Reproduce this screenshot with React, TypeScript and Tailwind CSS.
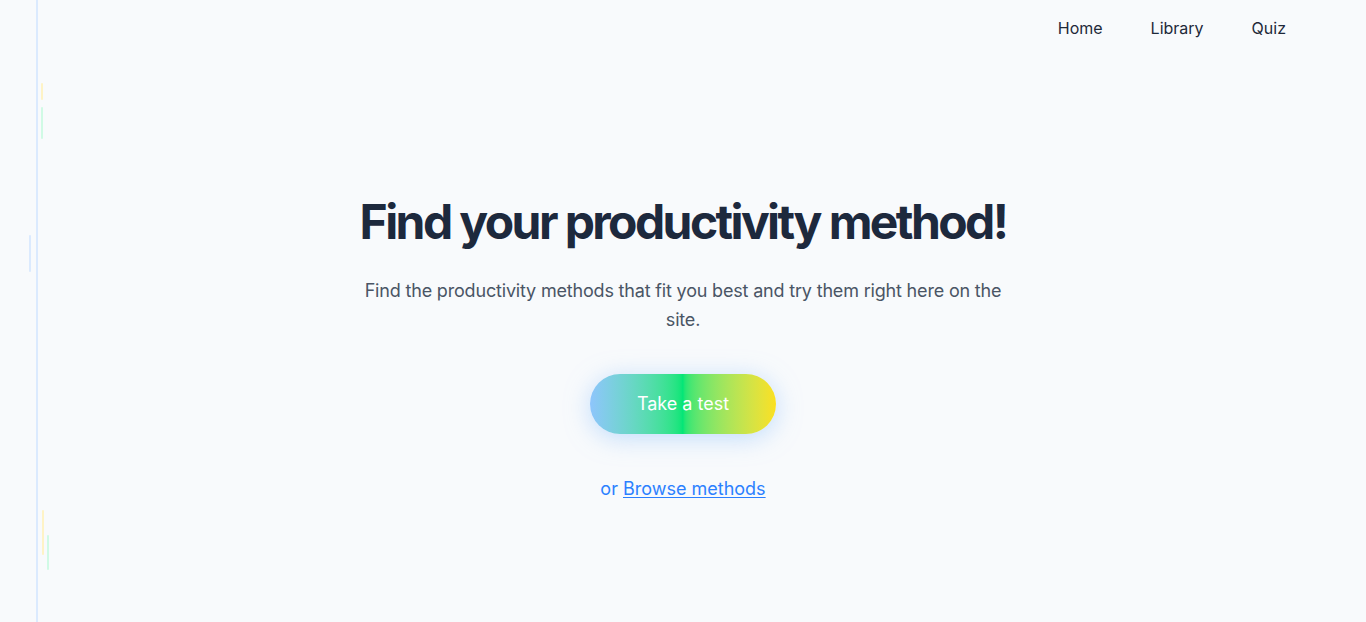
import { ReactNode } from "react";

function Streak({ className }: { className: string }) {
  return <span className={`absolute w-[2px] rounded-full ${className}`} />;
}

function NavLink({ children }: { children: ReactNode }) {
  return (
    <a href="#" className="text-base text-gray-800 hover:text-gray-900">
      {children}
    </a>
  );
}

export default function App() {
  return (
    <div
      className="relative h-screen overflow-hidden bg-slate-50 flex"
      style={{ fontFamily: "Inter, 'Noto Sans', sans-serif" }}
    >
      {/* left rail */}
      <aside className="w-[38px] flex-shrink-0 border-r-2 border-blue-100" />

      {/* faint decorative streaks */}
      <Streak className="left-[41px] top-[83px] h-[17px] bg-amber-100" />
      <Streak className="left-[41px] top-[107px] h-[32px] bg-emerald-100" />
      <Streak className="left-[29px] top-[235px] h-[37px] bg-blue-100" />
      <Streak className="left-[42px] top-[510px] h-[45px] bg-amber-100" />
      <Streak className="left-[47px] top-[535px] h-[35px] bg-emerald-100" />

      <div className="flex-1 flex flex-col">
        {/* Navbar */}
        <header className="h-14 flex items-center justify-end gap-12 pr-20">
          <NavLink>Home</NavLink>
          <NavLink>Library</NavLink>
          <NavLink>Quiz</NavLink>
        </header>

        {/* Hero */}
        <main className="flex flex-col items-center pt-[142px] pr-[38px]">
          <h1 className="text-5xl leading-none font-bold tracking-[-0.054em] text-slate-800">
            Find your productivity method!
          </h1>
          <p className="mt-[30px] max-w-2xl text-center text-lg leading-relaxed tracking-[-0.01em] text-gray-600">
            Find the productivity methods that fit you best and try them right here on the site.
          </p>
          <button className="mt-[39px] h-[60px] w-[186px] rounded-full bg-linear-to-r from-[#8ec5fc] via-[#00e676] to-[#fbe01e] text-lg text-white shadow-[0_4px_24px_rgba(147,197,253,0.55)]">
            Take a test
          </button>
          <p className="mt-[41px] text-lg leading-7 text-blue-500">
            or{" "}
            <a href="#" className="underline underline-offset-2">
              Browse methods
            </a>
          </p>
        </main>
      </div>
    </div>
  );
}
